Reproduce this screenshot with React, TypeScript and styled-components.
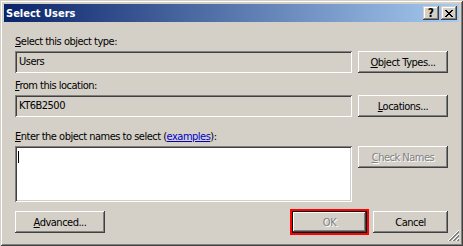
import React from "react";
import styled, { createGlobalStyle } from "styled-components";

const GlobalStyle = createGlobalStyle`
  html, body {
    margin: 0;
    padding: 0;
    background: #d4d0c8;
  }
  body {
    font-family: "DejaVu Sans Condensed", "DejaVu Sans", sans-serif;
    font-stretch: condensed;
    font-size: 11px;
    letter-spacing: -0.5px;
    color: #000;
  }
`;

const Window = styled.div`
  position: relative;
  width: 463px;
  height: 246px;
  box-sizing: border-box;
  padding: 4px;
  background: #d4d0c8;
  box-shadow: inset 1px 1px #d4d0c8, inset -1px -1px #404040,
    inset 2px 2px #ffffff, inset -2px -2px #808080;
  display: flex;
  flex-direction: column;
`;

const TitleBar = styled.div`
  height: 18px;
  display: flex;
  align-items: center;
  padding: 0 2px;
  background: linear-gradient(to right, #0a246a, #a6caf0);
  color: #fff;
  font-weight: bold;
  font-size: 11px;
  letter-spacing: 0;
`;

const Caption = styled.span`
  flex: 1;
  white-space: nowrap;
`;

const CaptionButtons = styled.div`
  display: flex;
  gap: 2px;
`;

const CaptionButton = styled.div`
  width: 16px;
  height: 14px;
  box-sizing: border-box;
  display: flex;
  align-items: center;
  justify-content: center;
  background: #d4d0c8;
  color: #000;
  font-size: 12px;
  font-weight: bold;
  line-height: 14px;
  box-shadow: inset -1px -1px #404040, inset 1px 1px #d4d0c8,
    inset -2px -2px #808080, inset 2px 2px #ffffff;
`;

const Content = styled.div`
  padding: 13px 11px 0;
  display: flex;
  flex-direction: column;
`;

const Label = styled.div<{ $gap: number }>`
  height: 14px;
  line-height: 14px;
  margin-top: ${(p) => p.$gap}px;
  margin-bottom: 2px;
  white-space: nowrap;
`;

const Link = styled.span`
  color: #0000c8;
  text-decoration: underline;
`;

const Row = styled.div`
  display: flex;
  align-items: flex-start;
  gap: 6px;
`;

const Field = styled.div<{ $tall?: boolean }>`
  width: 337px;
  height: ${(p) => (p.$tall ? 56 : 22)}px;
  box-sizing: border-box;
  padding: ${(p) => (p.$tall ? "5px 3px" : "0 4px")};
  line-height: 21px;
  background: ${(p) => (p.$tall ? "#ffffff" : "#d4d0c8")};
  box-shadow: inset 1px 1px #808080, inset -1px -1px #ffffff,
    inset 2px 2px #404040, inset -2px -2px #d4d0c8;
`;

const Caret = styled.span`
  display: block;
  width: 1px;
  height: 12px;
  background: #000;
`;

const Button = styled.button<{ $w: number; $disabled?: boolean; $default?: boolean }>`
  width: ${(p) => p.$w}px;
  height: 22px;
  flex: none;
  padding: 0;
  border: none;
  background: #d4d0c8;
  font: inherit;
  letter-spacing: inherit;
  line-height: 21px;
  color: ${(p) => (p.$disabled ? "#808080" : "#000")};
  text-shadow: ${(p) => (p.$disabled ? "1px 1px 0 #ffffff" : "none")};
  box-shadow: ${(p) =>
    p.$default
      ? "inset 0 0 0 1px #000, inset -2px -2px #404040, inset 2px 2px #ffffff, inset -3px -3px #808080"
      : "inset -1px -1px #404040, inset 1px 1px #ffffff, inset -2px -2px #808080, inset 2px 2px #d4d0c8"};
  outline: ${(p) => (p.$default ? "2px solid #ff0000" : "none")};
  white-space: nowrap;
`;

const Footer = styled.div`
  display: flex;
  gap: 6px;
  margin-top: 9px;
`;

const Spacer = styled.div`
  flex: 1;
`;

const Grip = styled.svg`
  position: absolute;
  right: 4px;
  bottom: 4px;
`;

const CloseGlyph = () => (
  <svg width="8" height="7" viewBox="0 0 8 7" shapeRendering="crispEdges">
    <path
      fill="#000"
      d="M0 0h2v1H0zM6 0h2v1H6zM1 1h2v1H1zM5 1h2v1H5zM2 2h4v1H2zM3 3h2v1H3zM2 4h4v1H2zM1 5h2v1H1zM5 5h2v1H5zM0 6h2v1H0zM6 6h2v1H6z"
    />
  </svg>
);

const SizeGrip = () => {
  const lines = [0, 4, 8];
  return (
    <Grip width="12" height="12" viewBox="0 0 12 12" shapeRendering="crispEdges">
      {lines.map((o) => (
        <g key={o}>
          <line x1={o + 0.5} y1={11.5} x2={11.5} y2={o + 0.5} stroke="#ffffff" />
          <line x1={o + 1.5} y1={11.5} x2={11.5} y2={o + 1.5} stroke="#808080" />
          <line x1={o + 2.5} y1={11.5} x2={11.5} y2={o + 2.5} stroke="#808080" />
        </g>
      ))}
    </Grip>
  );
};

export default function App() {
  return (
    <>
      <GlobalStyle />
      <Window>
        <TitleBar>
          <Caption>Select Users</Caption>
          <CaptionButtons>
            <CaptionButton>?</CaptionButton>
            <CaptionButton>
              <CloseGlyph />
            </CaptionButton>
          </CaptionButtons>
        </TitleBar>
        <Content>
          <Label $gap={0}>
            <u>S</u>elect this object type:
          </Label>
          <Row>
            <Field>Users</Field>
            <Button $w={90}>
              <u>O</u>bject Types...
            </Button>
          </Row>
          <Label $gap={6}>
            <u>F</u>rom this location:
          </Label>
          <Row>
            <Field>KT6B2500</Field>
            <Button $w={90}>
              <u>L</u>ocations...
            </Button>
          </Row>
          <Label $gap={13}>
            <u>E</u>nter the object names to select (<Link>examples</Link>):
          </Label>
          <Row>
            <Field $tall>
              <Caret />
            </Field>
            <Button $w={90} $disabled>
              <u>C</u>heck Names
            </Button>
          </Row>
          <Footer>
            <Button $w={90}>
              <u>A</u>dvanced...
            </Button>
            <Spacer />
            <Button $w={75} $disabled $default>
              OK
            </Button>
            <Button $w={75}>Cancel</Button>
          </Footer>
        </Content>
        <SizeGrip />
      </Window>
    </>
  );
}
